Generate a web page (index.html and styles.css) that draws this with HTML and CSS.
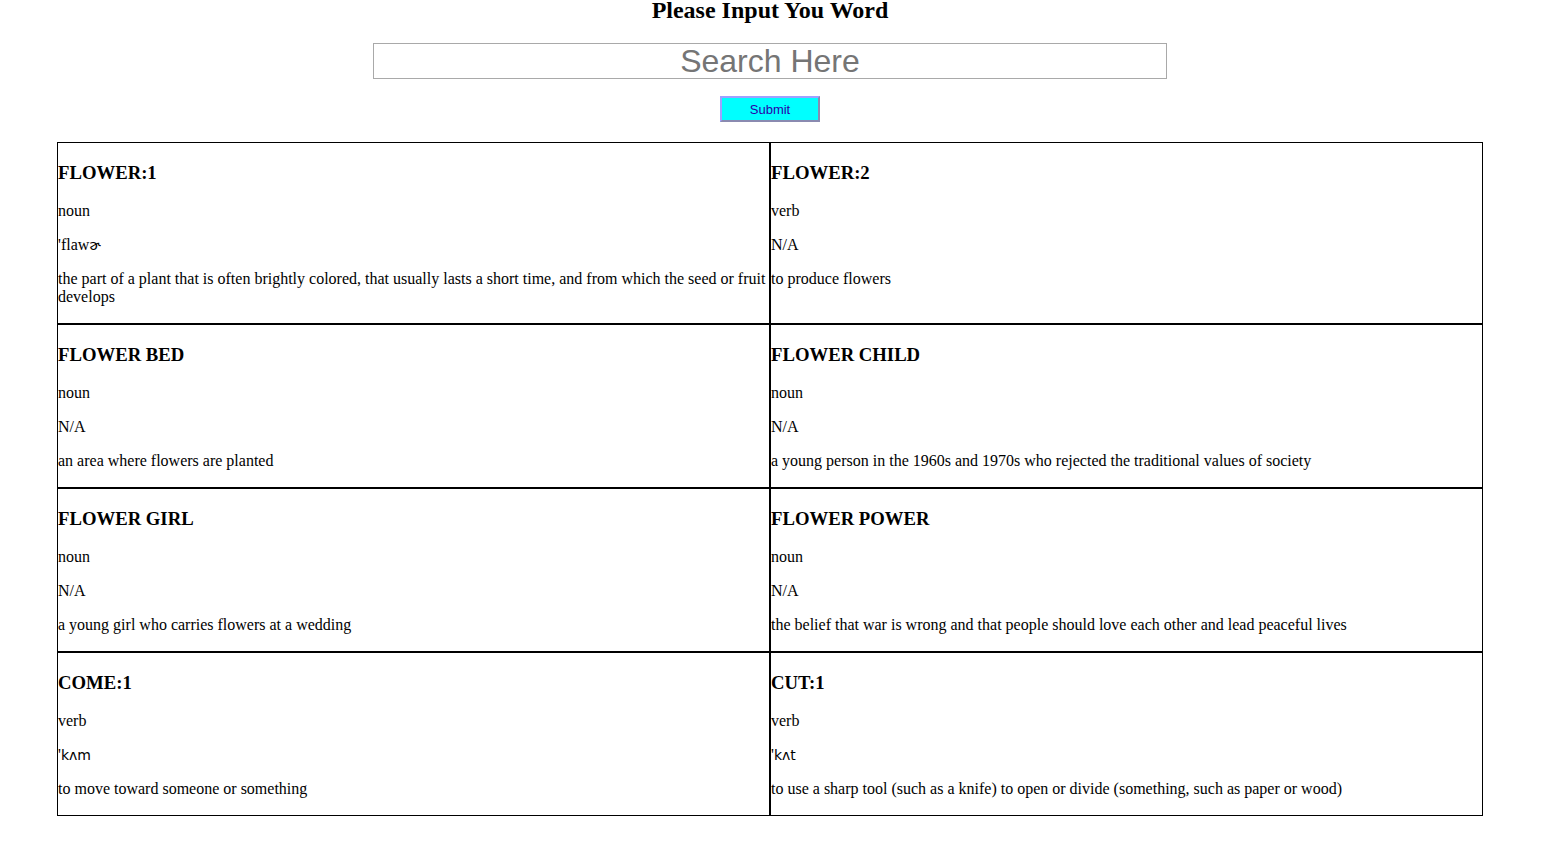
FILE: index.html
```html
<!DOCTYPE html>
<html>
<head>
<meta charset="utf-8">
<title>Dictionary</title>
<link rel="stylesheet" href="styles.css">
</head>
<body>
<div class="page">
  <h2 class="title">Please Input You Word</h2>
  <form class="search">
    <input class="search-input" type="text" placeholder="Search Here">
    <button class="submit" type="button">Submit</button>
  </form>
  <table class="results">
    <tr>
      <td><h3>FLOWER:1</h3><p>noun</p><p>'flaw<span class="ipa">ɚ</span></p><p>the part of a plant that is often brightly colored, that usually lasts a short time, and from which the seed or fruit develops</p></td>
      <td><h3>FLOWER:2</h3><p>verb</p><p>N/A</p><p>to produce flowers</p></td>
    </tr>
    <tr>
      <td><h3>FLOWER BED</h3><p>noun</p><p>N/A</p><p>an area where flowers are planted</p></td>
      <td><h3>FLOWER CHILD</h3><p>noun</p><p>N/A</p><p>a young person in the 1960s and 1970s who rejected the traditional values of society</p></td>
    </tr>
    <tr>
      <td><h3>FLOWER GIRL</h3><p>noun</p><p>N/A</p><p>a young girl who carries flowers at a wedding</p></td>
      <td><h3>FLOWER POWER</h3><p>noun</p><p>N/A</p><p>the belief that war is wrong and that people should love each other and lead peaceful lives</p></td>
    </tr>
    <tr>
      <td><h3>COME:1</h3><p>verb</p><p>'<span class="ipa">kʌm</span></p><p>to move toward someone or something</p></td>
      <td><h3>CUT:1</h3><p>verb</p><p>'<span class="ipa">kʌt</span></p><p>to use a sharp tool (such as a knife) to open or divide (something, such as paper or wood)</p></td>
    </tr>
  </table>
</div>
</body>
</html>
```
FILE: styles.css
```css
html, body {
  margin: 0;
  padding: 0;
  background: #ffffff;
}
body {
  font-family: "Liberation Serif", "Times New Roman", serif;
  font-size: 16px;
  color: #000;
}
.page {
  width: 1540px;
  display: flex;
  flex-direction: column;
  align-items: center;
}
.title {
  margin: 0;
  font-size: 24px;
  line-height: 20px;
  font-weight: bold;
  text-align: center;
}
.search {
  display: flex;
  flex-direction: column;
  align-items: center;
  margin-top: 23px;
}
.search-input {
  box-sizing: border-box;
  width: 794px;
  height: 36px;
  border: 1px solid #a9a9a9;
  padding: 0 4px;
  font-family: "Liberation Sans", Arial, sans-serif;
  font-size: 32px;
  text-align: center;
  outline: none;
}
.search-input::placeholder {
  color: #757575;
}
.submit {
  box-sizing: border-box;
  margin-top: 17px;
  width: 100px;
  height: 26px;
  background: #00ffff;
  border: 2px solid;
  border-color: #a0a0ff #8a8ab0 #8a8ab0 #a0a0ff;
  color: #2a00a8;
  font-family: "Liberation Sans", Arial, sans-serif;
  font-size: 13px;
  padding: 0;
}
.results {
  margin-top: 20px;
  width: 1426px;
  border-collapse: separate;
  border-spacing: 0;
  table-layout: fixed;
}
.results td {
  border: 1px solid #000;
  padding: 1px 0;
  vertical-align: top;
  text-align: left;
}
.results h3 {
  font-size: 18.72px;
  line-height: 20.5px;
  margin: 18.72px 0;
}
.results p {
  line-height: 18px;
  margin: 16px 0;
}
.ipa {
  font-family: "DejaVu Sans", sans-serif;
  font-size: 14px;
}
```
